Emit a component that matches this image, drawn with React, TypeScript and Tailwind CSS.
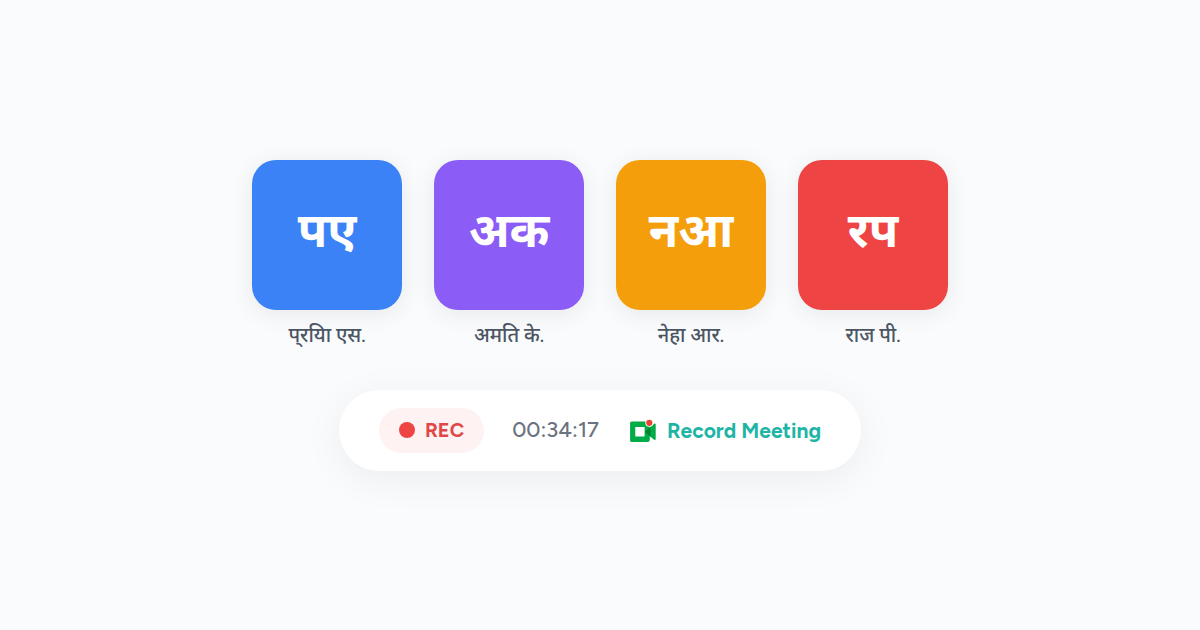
const PARTICIPANTS = [
  { initials: "पए", name: "प्\u200cरयिा एस.", color: "bg-[#3b82f6]" },
  { initials: "अक", name: "अमति के.", color: "bg-[#8b5cf6]" },
  { initials: "नआ", name: "नेहा आर.", color: "bg-[#f59e0b]" },
  { initials: "रप", name: "राज पी.", color: "bg-[#ef4444]" },
];

function MeetingIcon() {
  return (
    <svg viewBox="0 0 32 32" className="size-8" aria-hidden="true">
      <path
        fillRule="evenodd"
        d="M4.600 6.600h16.200a2 2 0 0 1 2 2v16.200a2.200 2.200 0 0 1-2.200 2.200h-16a1.500 1.500 0 0 1-1.500-1.500V8.100a1.500 1.500 0 0 1 1.500-1.500ZM8.300 12v9.400h9.300v-9.400Z"
        fill="#00ac47"
      />
      <path d="m22.500 12.500 4.700-3.800c.6-.5 1.500-.2 1.500.7v14.600c0 .9-.9 1.200-1.500.7L22.500 21Z" fill="#00ac47" />
      <path d="m23.500 11.900v9.800l-5.700-4.900Z" fill="#00832d" />
      <circle cx="22.300" cy="7.800" r="4" fill="#fff" />
      <circle cx="22.300" cy="7.800" r="3.100" fill="#ea4335" />
    </svg>
  );
}

export default function App() {
  return (
    <main className="min-h-screen flex flex-col items-center justify-center gap-10 bg-[#fafbfd] font-['Figtree','Noto_Sans','Noto_Sans_Devanagari',sans-serif]">
      <ul className="flex flex-wrap justify-center gap-8 pb-0.5">
        {PARTICIPANTS.map((p) => (
          <li key={p.name} className="flex flex-col items-center gap-3">
            <div className={`size-[150px] rounded-3xl flex items-center justify-center pb-2.5 text-5xl font-bold text-white shadow-[0_4px_24px_rgba(0,0,0,0.08)] ${p.color}`}>
              {p.initials}
            </div>
            <span className="text-xl leading-[26px] font-medium text-[#4b5563]">{p.name}</span>
          </li>
        ))}
      </ul>

      <div className="flex items-center gap-7 rounded-full bg-white px-10 py-[18px] shadow-[0_8px_40px_rgba(0,0,0,0.06)]">
        <div className="flex items-center gap-2.5 rounded-full bg-[#fef2f2] px-5 py-2">
          <span className="size-4 rounded-full bg-[#ef4444]" />
          <span className="text-xl leading-[29px] font-bold text-[#e04848]">REC</span>
        </div>
        <time className="text-[22px] leading-7 font-medium text-[#6b7280]">00:34:17</time>
        <button type="button" className="flex items-center gap-2 pt-0.5 text-[21px] font-bold text-[#1fb5a6]">
          <MeetingIcon />
          Record Meeting
        </button>
      </div>
    </main>
  );
}
